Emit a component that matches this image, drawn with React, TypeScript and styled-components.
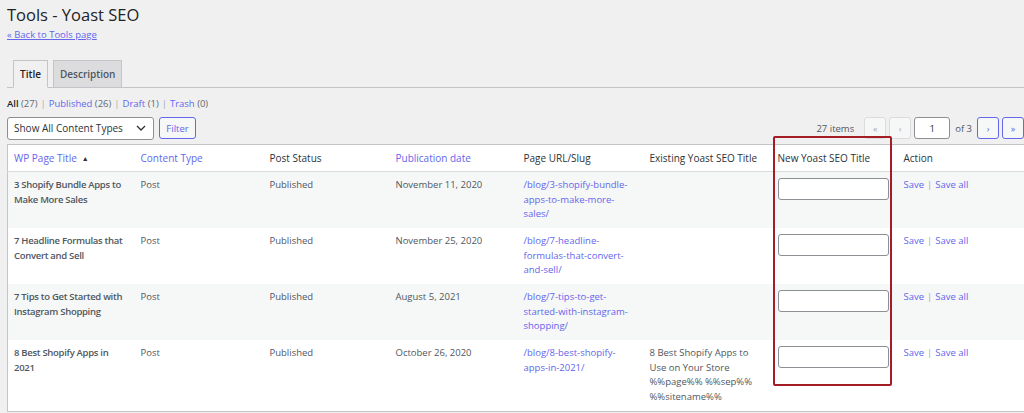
import styled, { createGlobalStyle } from "styled-components";

const GlobalStyle = createGlobalStyle`
  body {
    margin: 0;
    background: #f0f0f1;
    font-family: "Open Sans", "Noto Sans", sans-serif;
    font-size: 10px;
    color: #50575e;
    overflow: hidden;
  }
`;

const LINK = "#6466ec";

const Page = styled.div`
  position: relative;
  width: 1040px;
  padding: 0 0 0 7px;
`;

const Heading = styled.h1`
  margin: 0;
  padding-top: 4px;
  font-size: 16.5px;
  font-weight: 400;
  line-height: 22px;
  color: #1d2327;
`;

const BackLink = styled.a`
  display: block;
  margin-top: 2px;
  font-size: 9.5px;
  line-height: 13px;
  color: ${LINK};
  text-decoration: underline;
`;

const TabBar = styled.div`
  display: flex;
  gap: 5px;
  margin-top: 19px;
  padding-left: 6px;
  border-bottom: 1px solid #c3c4c7;
`;

const Tab = styled.div<{ $active?: boolean }>`
  height: 26px;
  padding: 0 6px;
  display: flex;
  align-items: center;
  font-size: 10px;
  font-weight: 600;
  border: 1px solid #c3c4c7;
  border-bottom: none;
  margin-bottom: -1px;
  background: ${(p) => (p.$active ? "#f0f0f1" : "#dcdcde")};
  color: ${(p) => (p.$active ? "#1d2327" : "#50575e")};
  ${(p) => p.$active && "border-bottom: 1px solid #f0f0f1;"}
`;

const StatusList = styled.div`
  display: flex;
  margin-top: 9px;
  line-height: 14px;
  font-size: 9.5px;
  color: #646970;
`;

const StatusLink = styled.span<{ $current?: boolean }>`
  color: ${(p) => (p.$current ? "#1d2327" : LINK)};
  font-weight: ${(p) => (p.$current ? 600 : 400)};
`;

const Sep = styled.span`
  color: #a7aaad;
  margin: 0 3px;
`;

const NavRow = styled.div`
  display: flex;
  align-items: center;
  margin-top: 5px;
  height: 24px;
  width: 1017px;
`;

const Select = styled.div`
  width: 147px;
  height: 23px;
  box-sizing: border-box;
  border: 1px solid #8c8f94;
  border-radius: 3px;
  background: #fff;
  display: flex;
  align-items: center;
  justify-content: space-between;
  padding: 0 7px 0 6px;
  color: #2c3338;
  font-size: 10px;
`;

const FilterButton = styled.div`
  margin-left: 5px;
  width: 37px;
  height: 22px;
  box-sizing: border-box;
  border: 1px solid ${LINK};
  border-radius: 3px;
  background: #f6f7f7;
  color: ${LINK};
  display: flex;
  align-items: center;
  justify-content: center;
  font-size: 9.5px;
`;

const Pagination = styled.div`
  margin-left: auto;
  display: flex;
  align-items: center;
  gap: 3px;
  color: #50575e;
  font-size: 9.5px;
`;

const Items = styled.span`
  margin-right: 7px;
`;

const PageButton = styled.div<{ $disabled?: boolean }>`
  width: 22px;
  height: 22px;
  box-sizing: border-box;
  border-radius: 3px;
  border: 1px solid ${(p) => (p.$disabled ? "#dcdcde" : LINK)};
  background: #f6f7f7;
  color: ${(p) => (p.$disabled ? "#a7aaad" : LINK)};
  display: flex;
  align-items: center;
  justify-content: center;
  font-size: 9px;
`;

const PageInput = styled.div`
  width: 36px;
  height: 22px;
  box-sizing: border-box;
  border: 1px solid #8c8f94;
  border-radius: 3px;
  background: #fff;
  display: flex;
  align-items: center;
  justify-content: center;
  color: #2c3338;
`;

const OfText = styled.span`
  margin: 0 2px;
`;

const Table = styled.table`
  margin-top: 4px;
  border-collapse: collapse;
  table-layout: fixed;
  width: 1030px;
  background: #fff;
  border: 1px solid #c3c4c7;
`;

const HeadCell = styled.th<{ $sortable?: boolean }>`
  text-align: left;
  font-weight: 400;
  font-size: 10px;
  height: 26px;
  padding: 0 6px;
  color: ${(p) => (p.$sortable ? LINK : "#2c3338")};
  border-bottom: 1px solid #dcdcde;
  white-space: nowrap;
`;

const Row = styled.tr<{ $alt?: boolean }>`
  background: ${(p) => (p.$alt ? "#f6f7f7" : "#fff")};
`;

const Cell = styled.td<{ $bold?: boolean; $link?: boolean; $tall?: boolean }>`
  vertical-align: top;
  padding: 6px 6px 0;
  height: ${(p) => (p.$tall ? "65px" : "50px")};
  font-size: 9.5px;
  line-height: 14.5px;
  font-weight: ${(p) => (p.$bold ? 600 : 400)};
  letter-spacing: ${(p) => (p.$bold ? "-0.3px" : "0")};
  color: ${(p) => (p.$link ? LINK : "#50575e")};
`;

const TitleInput = styled.div`
  width: 111px;
  height: 22px;
  box-sizing: border-box;
  border: 1px solid #8c8f94;
  border-radius: 3px;
  background: #fff;
`;

const ActionLink = styled.span`
  color: ${LINK};
`;

const ActionSep = styled.span`
  color: #a7aaad;
  margin: 0 3px;
`;

const Highlight = styled.div`
  position: absolute;
  left: 773px;
  top: 136px;
  width: 119px;
  height: 250px;
  box-sizing: border-box;
  border: 2px solid #a51d24;
  border-radius: 2px;
  pointer-events: none;
`;

const SortArrow = styled.span`
  display: inline-block;
  margin-left: 5px;
  font-size: 7px;
  color: #2c3338;
  vertical-align: 1px;
`;

const rows = [
  {
    title: "3 Shopify Bundle Apps to Make More Sales",
    date: "November 11, 2020",
    slug: "/blog/3-shopify-bundle-apps-to-make-more-sales/",
    existing: "",
  },
  {
    title: "7 Headline Formulas that Convert and Sell",
    date: "November 25, 2020",
    slug: "/blog/7-headline-formulas-that-convert-and-sell/",
    existing: "",
  },
  {
    title: "7 Tips to Get Started with Instagram Shopping",
    date: "August 5, 2021",
    slug: "/blog/7-tips-to-get-started-with-instagram-shopping/",
    existing: "",
  },
  {
    title: "8 Best Shopify Apps in 2021",
    date: "October 26, 2020",
    slug: "/blog/8-best-shopify-apps-in-2021/",
    existing: "8 Best Shopify Apps to Use on Your Store %%page%% %%sep%% %%sitename%%",
  },
];

function Chevron() {
  return (
    <svg width="10" height="6" viewBox="0 0 10 6" fill="none">
      <path d="M1 1l4 4 4-4" stroke="#2c3338" strokeWidth="1.3" />
    </svg>
  );
}

function App() {
  return (
    <>
      <GlobalStyle />
      <Page>
        <Heading>Tools - Yoast SEO</Heading>
        <BackLink>« Back to Tools page</BackLink>

        <TabBar>
          <Tab $active>Title</Tab>
          <Tab>Description</Tab>
        </TabBar>

        <StatusList>
          <span>
            <StatusLink $current>All</StatusLink> (27)
          </span>
          <Sep>|</Sep>
          <span>
            <StatusLink>Published</StatusLink> (26)
          </span>
          <Sep>|</Sep>
          <span>
            <StatusLink>Draft</StatusLink> (1)
          </span>
          <Sep>|</Sep>
          <span>
            <StatusLink>Trash</StatusLink> (0)
          </span>
        </StatusList>

        <NavRow>
          <Select>
            Show All Content Types
            <Chevron />
          </Select>
          <FilterButton>Filter</FilterButton>
          <Pagination>
            <Items>27 items</Items>
            <PageButton $disabled>«</PageButton>
            <PageButton $disabled>‹</PageButton>
            <PageInput>1</PageInput>
            <OfText>of 3</OfText>
            <PageButton>›</PageButton>
            <PageButton>»</PageButton>
          </Pagination>
        </NavRow>

        <Table>
          <colgroup>
            <col style={{ width: 127 }} />
            <col style={{ width: 129 }} />
            <col style={{ width: 126 }} />
            <col style={{ width: 128 }} />
            <col style={{ width: 126 }} />
            <col style={{ width: 128 }} />
            <col style={{ width: 126 }} />
            <col />
          </colgroup>
          <thead>
            <tr>
              <HeadCell $sortable>
                WP Page Title<SortArrow>▲</SortArrow>
              </HeadCell>
              <HeadCell $sortable>Content Type</HeadCell>
              <HeadCell>Post Status</HeadCell>
              <HeadCell $sortable>Publication date</HeadCell>
              <HeadCell>Page URL/Slug</HeadCell>
              <HeadCell>Existing Yoast SEO Title</HeadCell>
              <HeadCell>New Yoast SEO Title</HeadCell>
              <HeadCell>Action</HeadCell>
            </tr>
          </thead>
          <tbody>
            {rows.map((r, i) => (
              <Row key={r.slug} $alt={i % 2 === 0}>
                <Cell $bold $tall={i === 3}>{r.title}</Cell>
                <Cell>Post</Cell>
                <Cell>Published</Cell>
                <Cell>{r.date}</Cell>
                <Cell $link>{r.slug.replace(/-/g, "-\u200b")}</Cell>
                <Cell>{r.existing}</Cell>
                <Cell>
                  <TitleInput />
                </Cell>
                <Cell>
                  <ActionLink>Save</ActionLink>
                  <ActionSep>|</ActionSep>
                  <ActionLink>Save all</ActionLink>
                </Cell>
              </Row>
            ))}
          </tbody>
        </Table>
        <Highlight />
      </Page>
    </>
  );
}

export default App;
